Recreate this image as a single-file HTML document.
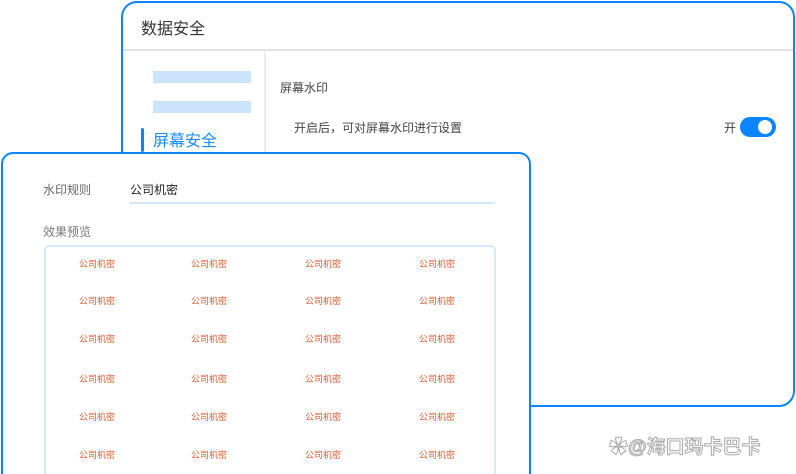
<!DOCTYPE html>
<html style="margin:0;width:796px;height:474px;overflow:hidden"><head><meta charset="utf-8"><style>
body{margin:0;width:796px;height:474px;overflow:hidden;background:#fff;font-family:"Liberation Sans","Noto Sans CJK SC",sans-serif;position:relative}
#w{position:absolute;left:0;top:0;width:796px;height:474px;overflow:hidden}
.back{position:absolute;left:121px;top:1px;width:670px;height:402px;border:2px solid #0a84ff;border-radius:16px;background:#fff}
.t{position:absolute;white-space:nowrap}
.front{position:absolute;left:1px;top:152px;width:526px;height:320px;border:2px solid #0a84ff;border-bottom:none;border-radius:12px 12px 0 0;background:#fff;overflow:hidden}
.wm{position:absolute;font-size:9px;color:#e0582a;transform:translateX(-50%)}
</style></head><body><div id="w">
<div class="back">
 <div class="t" style="left:18px;top:12px;font-size:16px;color:#333">数据安全</div>
 <div style="position:absolute;left:0;right:0;top:46px;height:2px;background:#e3e3e3"></div>
 <div style="position:absolute;left:141px;top:48px;width:2px;bottom:0;background:#ececec"></div>
 <div style="position:absolute;left:30px;top:68px;width:98px;height:12px;background:#cce4fb"></div>
 <div style="position:absolute;left:30px;top:98px;width:98px;height:12px;background:#cce4fb"></div>
 <div style="position:absolute;left:18px;top:125px;width:3px;height:24px;background:#0a84ff;border-radius:2px"></div>
 <div class="t" style="left:30px;top:124px;font-size:16px;color:#1a8cff">屏幕安全</div>
 <div class="t" style="left:157px;top:76px;font-size:12px;color:#444">屏幕水印</div>
 <div class="t" style="left:171px;top:116px;font-size:12px;color:#444">开启后，可对屏幕水印进行设置</div>
 <div class="t" style="left:601px;top:116px;font-size:12px;color:#444">开</div>
 <div style="position:absolute;left:617px;top:114px;width:36px;height:20px;border-radius:10px;background:#0a84ff"></div>
 <div style="position:absolute;left:635px;top:117px;width:14px;height:14px;border-radius:50%;background:#fff"></div>
</div>
<div class="front">
 <div class="t" style="left:40px;top:27px;font-size:12px;color:#666">水印规则</div>
 <div class="t" style="left:127px;top:27px;font-size:12px;color:#222">公司机密</div>
 <div style="position:absolute;left:127px;top:48px;width:365px;height:2px;background:#cfe6fb"></div>
 <div class="t" style="left:40px;top:69px;font-size:12px;color:#777">效果预览</div>
 <div style="position:absolute;left:41px;top:91px;width:448px;height:240px;border:2px solid #d4e9fc;border-radius:6px"></div>
</div>
<div id="g"></div>
<div class="t" style="left:609px;top:432px;font-size:19px;color:#fff;-webkit-text-stroke:1px #aaa;font-weight:bold">✿@海口玛卡巴卡</div>
</div>
<script>
var xs=[97,209,323,437],ys=[257,294,332,372,410,448],h='';
ys.forEach(y=>xs.forEach(x=>{h+='<div class="t wm" style="left:'+x+'px;top:'+y+'px">公司机密</div>'}));
document.getElementById('g').innerHTML=h;
</script>
</body></html>
